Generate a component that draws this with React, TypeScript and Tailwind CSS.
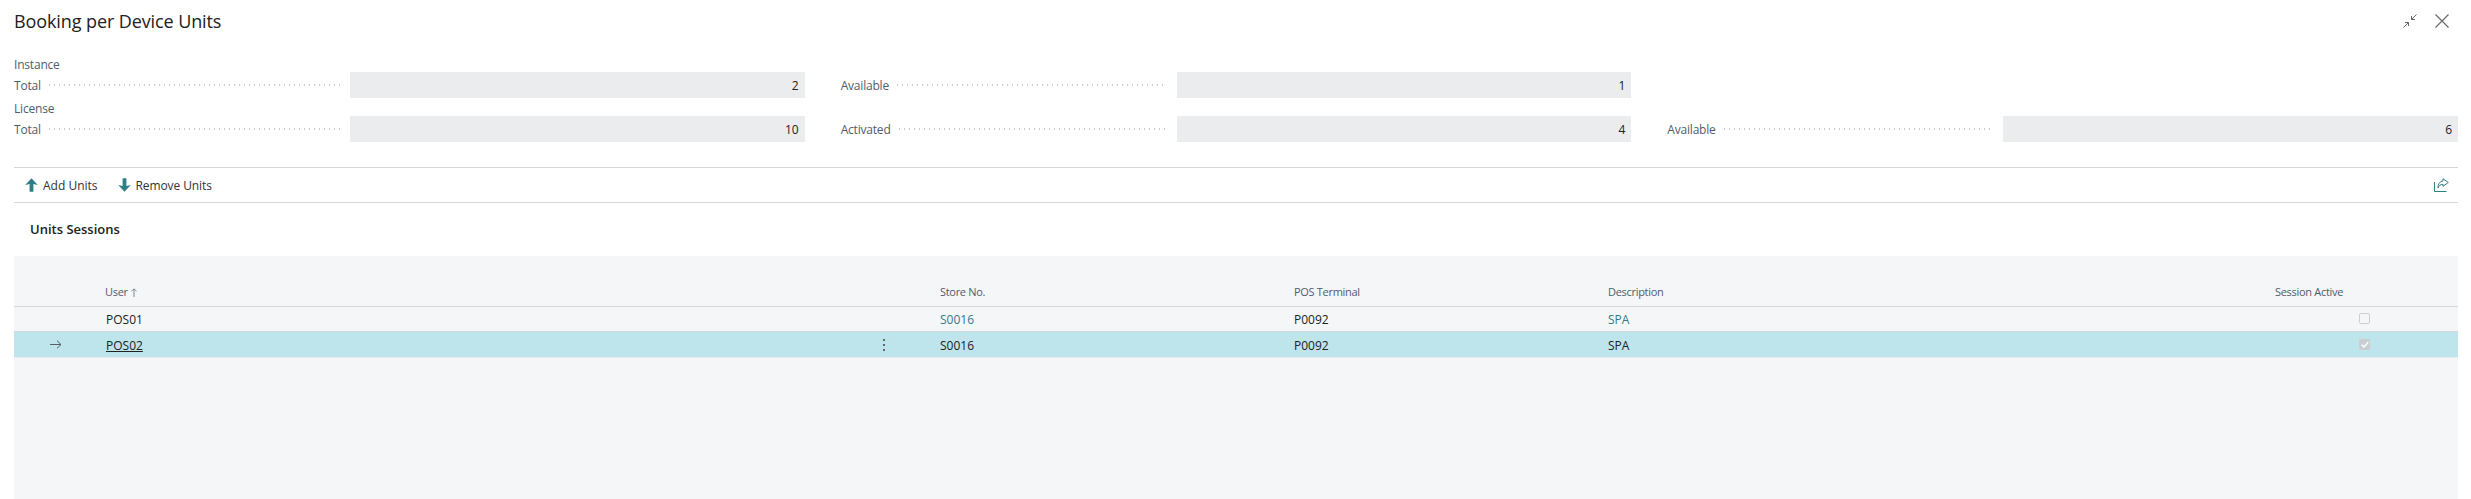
import React from "react";

const font = { fontFamily: '"Open Sans", "Noto Sans", sans-serif' };

function Field({ label, value, color = "text-[#505c6d]" }: { label: string; value: string; color?: string }) {
  return (
    <div className="flex h-[26px] items-center">
      <div className="flex w-[336px] shrink-0 items-center">
        <span className={`pt-[2px] text-[12px] tracking-[-0.2px] ${color}`}>{label}</span>
        <span className="ml-2 mr-[10px] h-[2px] flex-1 bg-[repeating-linear-gradient(90deg,#cccccc_0,#cccccc_1px,transparent_1px,transparent_5px)]" />
      </div>
      <div className="flex h-[26px] flex-1 items-center justify-end bg-[#ebecee] pr-[6px] pt-[2px] text-[12px] text-[#212121]">{value}</div>
    </div>
  );
}

function Caption({ children }: { children: React.ReactNode }) {
  return <div className="flex h-[20px] items-center pt-[2px] text-[12px] tracking-[-0.2px] text-[#505c6d]">{children}</div>;
}

function ArrowThick({ down }: { down?: boolean }) {
  return (
    <svg width="13" height="14" viewBox="0 0 13 14" className={down ? "rotate-180" : ""}>
      <path d="M6.5 0.3 L12.8 7 L8.4 6 V13.7 H4.6 V6 L0.2 7 Z" fill="#2f7d86" />
    </svg>
  );
}

export default function App() {
  return (
    <div style={font} className="flex h-[499px] w-[2471px] flex-col overflow-hidden bg-white pl-[14px] pr-[13px]">
      <header className="flex h-[54px] shrink-0 items-start justify-between">
        <h1 className="mt-[7px] text-[18px] font-normal leading-[28px] tracking-[-0.1px] text-[#212121]">Booking per Device Units</h1>
        <div className="mt-[14px] flex gap-[18px] pr-[9px] text-[#666666]">
          <svg width="14" height="14" viewBox="0 0 14 14" fill="none" stroke="currentColor" strokeWidth="1">
            <path d="M0.5 13.5 L5.5 8.5 M2 8.5 H5.5 V12 M13.5 0.5 L8.5 5.5 M8.5 2 V5.5 H12" />
          </svg>
          <svg width="14" height="14" viewBox="0 0 14 14" fill="none" stroke="currentColor" strokeWidth="1.1">
            <path d="M0.5 0.5 L13.5 13.5 M13.5 0.5 L0.5 13.5" />
          </svg>
        </div>
      </header>

      <section className="grid shrink-0 grid-cols-3 gap-x-[36px]">
        <div className="col-span-3 -mb-[2px]"><Caption>Instance</Caption></div>
        <Field label="Total" value="2" />
        <Field label="Available" value="1" />
        <div />
        <div className="col-span-3 -mb-[2px]"><Caption>License</Caption></div>
        <Field label="Total" value="10" />
        <Field label="Activated" value="4" />
        <Field label="Available" value="6" />
      </section>

      <nav className="mt-[25px] flex h-[36px] shrink-0 items-center border-y border-[#d6d6d6] pl-[11px] pr-[9px] text-[12px] text-[#333333]">
        <span className="flex items-center gap-[5px]"><ArrowThick /><span className="pt-[1px]">Add Units</span></span>
        <span className="ml-[20px] flex items-center gap-[5px] tracking-[-0.1px]"><ArrowThick down /><span className="pt-[1px]">Remove Units</span></span>
        <svg className="ml-auto" width="15" height="14" viewBox="0 0 15 14" fill="none" stroke="#2f7d86" strokeWidth="1">
          <path d="M0.5 4 V13.5 H12.5" />
          <path d="M9 0.7 L14.3 4.5 L9 8.3 V6.3 C6.5 6.3 5 7.5 4 10 C3.8 6.5 5.5 3.3 9 2.9 Z" />
        </svg>
      </nav>

      <h2 className="ml-[16px] mt-[16px] h-[37px] shrink-0 text-[13px] font-semibold leading-[20px] text-[#212121]">Units Sessions</h2>

      <section className="flex flex-1 flex-col bg-[#f5f6f8] text-[12px] text-[#212121]">
        <div className="mt-[24px] flex h-[27px] shrink-0 items-center border-b border-[#d3d6dc] pb-[2px] text-[11px] tracking-[-0.3px] text-[#505c6d]">
          <span className="ml-[91px] flex w-[835px] items-center gap-[3px]">
            User
            <svg width="6" height="9" viewBox="0 0 6 9" fill="none" stroke="#7d8794" strokeWidth="1"><path d="M3 9 V1 M0.5 3.2 L3 0.8 L5.5 3.2" /></svg>
          </span>
          <span className="w-[354px]">Store No.</span>
          <span className="w-[314px]">POS Terminal</span>
          <span className="w-[667px]">Description</span>
          <span>Session Active</span>
        </div>
        <div className="flex h-[25px] shrink-0 items-center border-b border-[#d3d6dc] pt-[2px]">
          <span className="ml-[92px] w-[834px]">POS01</span>
          <span className="w-[354px] text-[#2f7d86]">S0016</span>
          <span className="w-[314px]">P0092</span>
          <span className="w-[751px] text-[#2f7d86]">SPA</span>
          <span className="-mt-[3px] h-[11px] w-[11px] rounded-[2px] border border-[#cfcfcf] bg-[#f5f6f8]" />
        </div>
        <div className="flex h-[26px] shrink-0 items-center border-b border-[#e8eaee] bg-[#bde5eb] pt-[2px]">
          <svg className="-mt-[2px] ml-[36px]" width="12" height="9" viewBox="0 0 12 9" fill="none" stroke="#555f66" strokeWidth="1">
            <path d="M0 4.5 H11 M7 0.7 L11 4.5 L7 8.3" />
          </svg>
          <span className="ml-[44px] w-[776px] underline">POS02</span>
          <span className="-mt-[2px] flex w-[58px] flex-col gap-[3px] pl-[1px]">
            <span className="h-[2px] w-[2px] bg-[#666666]" />
            <span className="h-[2px] w-[2px] bg-[#666666]" />
            <span className="h-[2px] w-[2px] bg-[#666666]" />
          </span>
          <span className="w-[354px]">S0016</span>
          <span className="w-[314px]">P0092</span>
          <span className="w-[751px]">SPA</span>
          <span className="-mt-[2px] flex h-[11px] w-[11px] items-center justify-center rounded-[2px] bg-[#c9cfd1]">
            <svg width="8" height="7" viewBox="0 0 8 7" fill="none" stroke="#ffffff" strokeWidth="1.3"><path d="M0.7 3.7 L3 6 L7.3 1" /></svg>
          </span>
        </div>
      </section>
    </div>
  );
}
